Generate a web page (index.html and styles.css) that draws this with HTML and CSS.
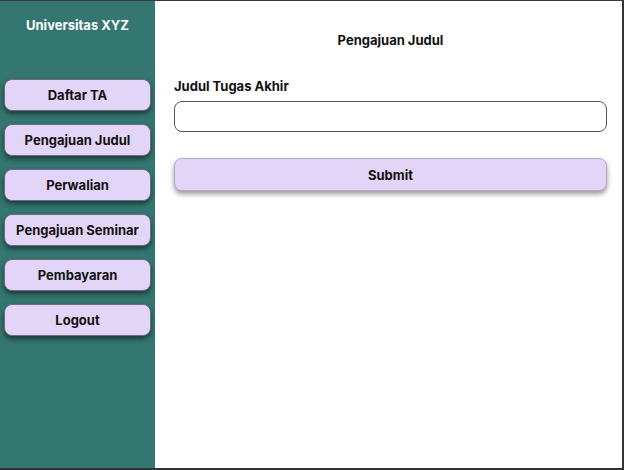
FILE: index.html
```html
<!DOCTYPE html>
<html>
<head>
<meta charset="utf-8">
<link rel="stylesheet" href="styles.css">
</head>
<body>
<div class="frame">
  <aside class="sidebar">
    <div class="brand">Universitas XYZ</div>
    <nav class="menu">
      <button class="menu-btn">Daftar TA</button>
      <button class="menu-btn">Pengajuan Judul</button>
      <button class="menu-btn">Perwalian</button>
      <button class="menu-btn">Pengajuan Seminar</button>
      <button class="menu-btn">Pembayaran</button>
      <button class="menu-btn">Logout</button>
    </nav>
  </aside>
  <main class="content">
    <h1 class="page-title">Pengajuan Judul</h1>
    <label class="field-label">Judul Tugas Akhir</label>
    <input class="field-input" type="text">
    <button class="submit-btn">Submit</button>
  </main>
</div>
</body>
</html>
```
FILE: styles.css
```css
* { box-sizing: border-box; }
html, body { margin: 0; padding: 0; }
body {
  width: 624px;
  height: 470px;
  overflow: hidden;
  font-family: Inter, "Liberation Sans", sans-serif;
  background: #fff;
}
.frame {
  display: flex;
  width: 624px;
  height: 470px;
  border-top: 1px solid #3a3a3a;
  border-right: 2px solid #333;
  border-bottom: 2px solid #333;
}
.sidebar {
  width: 155px;
  flex: none;
  background: #347770;
  display: flex;
  flex-direction: column;
  align-items: center;
}
.brand {
  color: #fff;
  font-weight: 700;
  font-size: 13px;
  margin-top: 16px;
  line-height: 16px;
}
.menu {
  display: flex;
  flex-direction: column;
  gap: 13px;
  margin-top: 46px;
  padding: 0 4px;
  width: 100%;
}
.menu-btn {
  height: 32px;
  width: 100%;
  background: #e2d5f8;
  border: 1px solid #6e6a80;
  border-radius: 8px;
  font-family: inherit;
  font-weight: 700;
  font-size: 13px;
  color: #111;
  box-shadow: 0 3px 5px rgba(20, 45, 45, 0.8);
  padding: 0;
}
.content {
  flex: 1;
  display: flex;
  flex-direction: column;
  padding: 0 15px 0 19px;
}
.page-title {
  margin: 31px 0 0;
  font-size: 13px;
  font-weight: 700;
  text-align: center;
  line-height: 16px;
  color: #111;
}
.field-label {
  margin-top: 30px;
  font-size: 13px;
  font-weight: 700;
  line-height: 16px;
  color: #111;
}
.field-input {
  margin-top: 7px;
  height: 31px;
  width: 433px;
  border: 1px solid #555;
  border-radius: 8px;
  background: #fff;
}
.submit-btn {
  margin-top: 26px;
  height: 33px;
  width: 433px;
  background: #e2d5f8;
  border: 1px solid #b6aac8;
  border-radius: 8px;
  font-family: inherit;
  font-weight: 700;
  font-size: 13px;
  color: #111;
  box-shadow: 0 3px 5px rgba(80, 80, 80, 0.6);
}
```
